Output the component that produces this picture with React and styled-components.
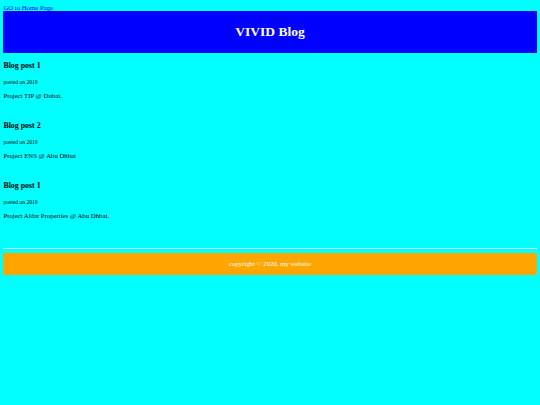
import React from "react";
import styled, { createGlobalStyle } from "styled-components";

const posts = [
  { title: "Blog post 1", year: 2019, text: "Project TIP @ Dubai." },
  { title: "Blog post 2", year: 2019, text: "Project ENS @ Abu Dhbai" },
  { title: "Blog post 1", year: 2019, text: "Project Aldar Properties @ Abu Dhbai." },
];

const GlobalStyle = createGlobalStyle`
  html, body {
    background: #00ffff;
  }
  body {
    margin: 4px 3.375px;
    font-family: "Liberation Serif", "Times New Roman", serif;
    font-size: 6.75px;
    color: #000;
  }
`;

const HomeLink = styled.a`
  color: #0000ee;
  text-decoration: underline;
`;

const Header = styled.header`
  background: #0000ff;
  padding: 4.2px 0;

  h1 {
    margin: 9.05px 0;
    font-size: 13.5px;
    font-weight: bold;
    color: #ffffff;
    text-align: center;
  }
`;

const Post = styled.article`
  padding-bottom: 7.76px;

  h3 {
    margin: 7.9px 0;
    font-size: 7.9px;
    font-weight: bold;
  }
  p {
    margin: 6.75px 0;
  }
  small {
    font-size: 5.6px;
  }
`;

const Divider = styled.hr`
  margin: 14.6px 0 3.375px;
  height: 0;
  border: none;
  border-top: 1px solid #c4ffff;
`;

const Footer = styled.footer`
  background: #ffa500;
  padding: 1px 0;

  p {
    margin: 6.75px 0;
    color: #ffffff;
    text-align: center;
  }
`;

const App = () => {
  return (
    <>
      <GlobalStyle />
      <HomeLink href="#">GO to Home Page</HomeLink>
      <Header>
        <h1>VIVID Blog</h1>
      </Header>
      {posts.map((post, i) => (
        <Post key={i}>
          <h3>{post.title}</h3>
          <p>
            <small>posted on {post.year}</small>
          </p>
          <p>{post.text}</p>
        </Post>
      ))}
      <Divider />
      <Footer>
        <p>copyright © 2020, my website</p>
      </Footer>
    </>
  );
};

export default App;
